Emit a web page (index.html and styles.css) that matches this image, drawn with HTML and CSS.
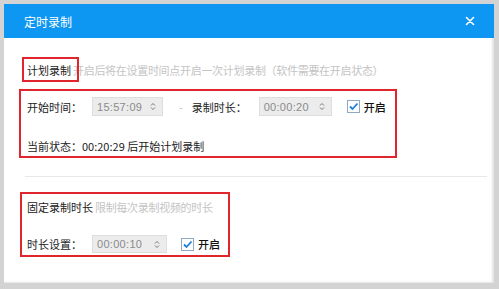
FILE: index.html
```html
<!DOCTYPE html>
<html lang="zh-CN">
<head>
<meta charset="utf-8">
<link rel="stylesheet" href="styles.css">
</head>
<body>
<div class="dialog">
  <div class="titlebar">
    <span class="title">定时录制</span>
    <svg class="close" width="10" height="10" viewBox="0 0 10 10"><path d="M1.5 1.5 L8.5 8.5 M8.5 1.5 L1.5 8.5" stroke="#fff" stroke-width="1.6" stroke-linecap="round"/></svg>
  </div>
  <div class="content">
    <div class="sec-head s1">
      <span class="sec-title marked">计划录制</span>
      <span class="hint">开启后将在设置时间点开启一次计划录制（软件需要在开启状态）</span>
    </div>
    <div class="redbox box2">
      <div class="row r1">
        <span class="label">开始时间：</span>
        <div class="spin w1"><span class="val">15:57:09</span><svg class="arrows" width="6" height="9" viewBox="0 0 6 9"><path d="M1 3.5 L3 1.5 L5 3.5 M1 5.5 L3 7.5 L5 5.5" fill="none" stroke="#777" stroke-width="1"/></svg></div>
        <span class="dash">-</span>
        <span class="label l2">录制时长：</span>
        <div class="spin w2"><span class="val">00:00:20</span><svg class="arrows" width="6" height="9" viewBox="0 0 6 9"><path d="M1 3.5 L3 1.5 L5 3.5 M1 5.5 L3 7.5 L5 5.5" fill="none" stroke="#777" stroke-width="1"/></svg></div>
        <span class="check c1"><span class="cb"><svg width="11" height="11" viewBox="0 0 11 11"><path d="M2 5.5 L4.5 8 L9.5 2.5" fill="none" stroke="#1f7fd8" stroke-width="1.8"/></svg></span><span class="ck-text">开启</span></span>
      </div>
      <div class="row r2">当前状态：00:20:29 后开始计划录制</div>
    </div>
    <div class="sep"></div>
    <div class="redbox box3">
      <div class="sec-head s2">
        <span class="sec-title">固定录制时长</span>
        <span class="hint">限制每次录制视频的时长</span>
      </div>
      <div class="row r3">
        <span class="label">时长设置：</span>
        <div class="spin w3"><span class="val">00:00:10</span><svg class="arrows" width="6" height="9" viewBox="0 0 6 9"><path d="M1 3.5 L3 1.5 L5 3.5 M1 5.5 L3 7.5 L5 5.5" fill="none" stroke="#777" stroke-width="1"/></svg></div>
        <span class="check c3"><span class="cb"><svg width="11" height="11" viewBox="0 0 11 11"><path d="M2 5.5 L4.5 8 L9.5 2.5" fill="none" stroke="#1f7fd8" stroke-width="1.8"/></svg></span><span class="ck-text">开启</span></span>
      </div>
    </div>
  </div>
</div>
</body>
</html>
```

FILE: styles.css
```css
html, body {
  margin: 0;
  padding: 0;
}
body {
  background: #d3d3d3;
  width: 499px;
  height: 289px;
  overflow: hidden;
  font-family: "Noto Sans CJK SC", "Liberation Sans", sans-serif;
  font-size: 11px;
  color: #333;
}
.dialog {
  margin: 4px 0 0 4px;
  width: 490px;
  height: 279px;
  background: #fff;
  box-shadow: inset -3px -2px 2px -1px #e4e4e4;
  display: flex;
  flex-direction: column;
}
.titlebar {
  height: 34px;
  background: #0d96f2;
  display: flex;
  align-items: center;
  justify-content: space-between;
  padding: 0 19px 0 20px;
  flex-shrink: 0;
}
.title {
  color: #fff;
  font-size: 12px;
}
.close {
  display: block;
}
.content {
  padding-left: 15px;
}
.sec-head {
  display: flex;
  align-items: center;
  height: 16px;
  line-height: 16px;
}
.s1 {
  margin-top: 24px;
  padding-left: 8px;
}
.sec-title {
  color: #222;
  position: relative;
  display: inline-block;
}
.marked::after {
  content: "";
  position: absolute;
  left: -5px;
  right: -8px;
  top: -5px;
  bottom: -4px;
  border: 2px solid #e0262c;
}
.hint {
  color: #c4c4c4;
  margin-left: 2px;
  letter-spacing: -0.3px;
}
.redbox {
  border: 2px solid #e0262c;
  box-sizing: border-box;
}
.box2 {
  margin-top: 11px;
  width: 378px;
  height: 69px;
  padding: 6px 0 0 6px;
}
.row {
  display: flex;
  align-items: center;
}
.r1 {
  height: 19px;
}
.label {
  width: 65px;
  color: #222;
}
.l2 {
  width: 67px;
}
.spin {
  height: 19px;
  box-sizing: border-box;
  background: #ececec;
  border: 1px solid #dedede;
  display: flex;
  align-items: center;
  justify-content: space-between;
  padding: 0 6px 0 4px;
  color: #8a8a8a;
  font-family: "Liberation Sans", sans-serif;
  font-size: 11px;
  letter-spacing: 0.3px;
}
.w1 { width: 71px; }
.w2 { width: 73px; }
.w3 { width: 75px; height: 18px; }
.dash {
  color: #c8c8c8;
  margin: 0 9px 0 16px;
  font-family: "Liberation Sans", sans-serif;
}
.check {
  display: flex;
  align-items: center;
  margin-left: 15px;
}
.c3 {
  margin-left: 14px;
}
.cb {
  width: 13px;
  height: 13px;
  box-sizing: border-box;
  border: 1px solid #8fa9c4;
  background: #fff;
  display: flex;
  align-items: center;
  justify-content: center;
}
.cb svg {
  display: block;
}
.ck-text {
  margin-left: 4px;
  color: #111;
  font-weight: 500;
}
.r2 {
  margin-top: 21px;
  height: 18px;
  color: #222;
}
.sep {
  margin: 18px 0 0 6px;
  width: 462px;
  height: 1px;
  background: #e8e8e8;
}
.box3 {
  margin: 15px 0 0 1px;
  width: 210px;
  height: 65px;
  padding: 5px 0 0 5px;
}
.r3 {
  margin-top: 20px;
  height: 18px;
}
```
